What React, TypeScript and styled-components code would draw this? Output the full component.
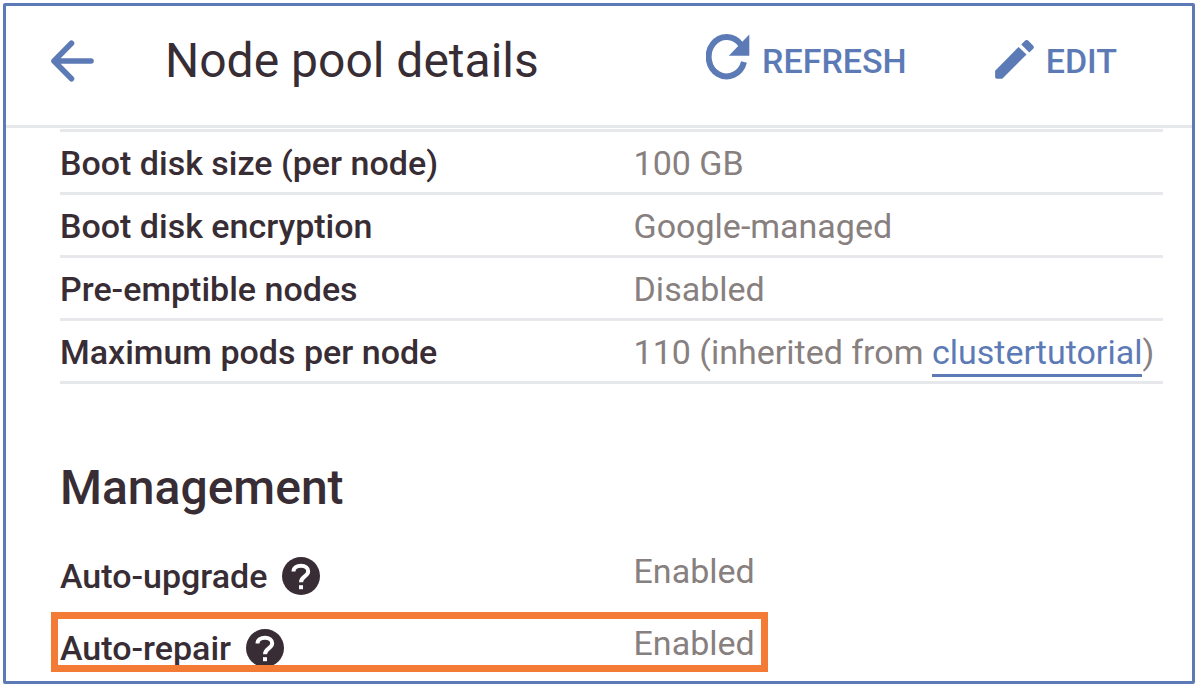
import React from "react";
import styled, { createGlobalStyle } from "styled-components";

const blue = "#5c7bb6";
const ink = "#382d34";
const muted = "#87807f";
const line = "#e6e8eb";
const orange = "#f47b36";

const GlobalStyle = createGlobalStyle`
  *, *::before, *::after { box-sizing: border-box; }
  body {
    margin: 0;
    background: #fff;
    color: ${ink};
    font-family: Roboto, "Liberation Sans", sans-serif;
    font-size: 34px;
    line-height: 40px;
  }
`;

const Page = styled.div`
  display: flex;
  min-height: 100vh;
  padding: 3px 4px 5px 3px;
`;

const Panel = styled.main`
  flex: 1;
  border: 3px solid ${blue};
  border-radius: 2px;
`;

const Header = styled.header`
  display: flex;
  align-items: center;
  padding: 27px 75px 36px 44px;
  border-bottom: 3px solid ${line};
`;

const Title = styled.h1`
  margin: 0 0 0 71px;
  font-size: 48px;
  line-height: 56px;
  font-weight: 400;
`;

const Toolbar = styled.div`
  display: flex;
  gap: 88px;
  margin-left: auto;
`;

const ToolButton = styled.button`
  display: flex;
  align-items: center;
  gap: 12px;
  padding: 0;
  border: 0;
  background: none;
  color: ${blue};
  font: inherit;
  font-weight: 500;
  cursor: pointer;

  svg { display: block; }
`;

const Content = styled.div`
  padding: 0 29px 8px 54px;
`;

const Details = styled.table`
  width: 100%;
  margin-top: 1px;
  border-collapse: collapse;
  table-layout: fixed;
  border-top: 3px solid ${line};

  tr { border-bottom: 3px solid ${line}; }
  th, td {
    height: 63px;
    padding: 2px 0 0;
    text-align: left;
    white-space: nowrap;
  }
  th { width: 52%; font-weight: 500; }
  td { color: ${muted}; }
`;

const ClusterLink = styled.a`
  padding-bottom: 2px;
  border-bottom: 3px solid ${blue};
  color: ${blue};
  text-decoration: none;
`;

const SectionTitle = styled.h2`
  margin: 76px 0 37px;
  font-size: 48px;
  line-height: 56px;
  font-weight: 500;
`;

const Settings = styled.dl`
  display: flex;
  flex-direction: column;
  gap: 26px;
  margin: 0;
`;

const Setting = styled.div<{ $highlighted?: boolean }>`
  position: relative;
  display: grid;
  grid-template-columns: 52% 1fr;
  align-items: start;

  &::after {
    content: ${(p) => (p.$highlighted ? '""' : "none")};
    position: absolute;
    top: -13px;
    left: -9px;
    width: 65%;
    height: 60px;
    border: 7px solid ${orange};
    pointer-events: none;
  }
`;

const SettingName = styled.dt`
  display: flex;
  align-items: center;
  gap: 15px;
  height: 46px;
  font-weight: 500;
`;

const SettingValue = styled.dd`
  margin: 0;
  line-height: 36px;
  color: ${muted};
`;

const BackIcon = () => (
  <svg width="44" height="42" viewBox="0 0 44 42" fill="none" stroke="currentColor" strokeWidth="5.6" strokeLinecap="round" strokeLinejoin="round" aria-hidden="true">
    <path d="M41 21H4M21.5 3.2 4 21l17.500 17.800" />
  </svg>
);

const RefreshIcon = () => (
  <svg width="44" height="54" viewBox="0 0 44 54" aria-hidden="true">
    <path d="M35 10.800A18 19.700 0 1 0 38 28" fill="none" stroke="currentColor" strokeWidth="6" />
    <path d="M43.300 0.500v21.300H22.800z" fill="currentColor" />
  </svg>
);

const EditIcon = () => (
  <svg width="39" height="43" viewBox="3 3 18 20" fill="currentColor" aria-hidden="true">
    <path d="M3 17.250V20.200Q3 21 3.800 21H6.300L17.600 9.800l-3.700-3.600z" />
    <path d="M20.710 7.040c.39-.39.39-1.020 0-1.410l-2.340-2.340c-.39-.39-1.020-.39-1.410 0l-1.830 1.830 3.750 3.750z" />
  </svg>
);

const HelpIcon = () => (
  <svg width="38" height="38" viewBox="0 0 38 38" fill="none" aria-hidden="true">
    <circle cx="19" cy="19" r="19" fill={ink} />
    <path d="M11.500 14.500C11.500 10.500 15 8.800 19 8.800c4.300 0 7.200 2 7.200 5.500 0 5.200-7.200 5.200-7.200 11" stroke="#fff" strokeWidth="4" />
    <path d="M17 28.200h4v4h-4z" fill="#fff" />
  </svg>
);

const rows: { name: string; value: React.ReactNode }[] = [
  { name: "Boot disk size (per node)", value: "100 GB" },
  { name: "Boot disk encryption", value: "Google-managed" },
  { name: "Pre-emptible nodes", value: "Disabled" },
  {
    name: "Maximum pods per node",
    value: <>110 (inherited from <ClusterLink href="#clustertutorial">clustertutorial</ClusterLink>)</>,
  },
];

const settings = [
  { name: "Auto-upgrade", value: "Enabled", highlighted: false },
  { name: "Auto-repair", value: "Enabled", highlighted: true },
];

export default function App() {
  return (
    <>
      <GlobalStyle />
      <Page>
        <Panel>
          <Header>
            <ToolButton type="button" aria-label="Back"><BackIcon /></ToolButton>
            <Title>Node pool details</Title>
            <Toolbar>
              <ToolButton type="button"><RefreshIcon />REFRESH</ToolButton>
              <ToolButton type="button"><EditIcon />EDIT</ToolButton>
            </Toolbar>
          </Header>
          <Content>
            <Details>
              <tbody>
                {rows.map((row) => (
                  <tr key={row.name}>
                    <th scope="row">{row.name}</th>
                    <td>{row.value}</td>
                  </tr>
                ))}
              </tbody>
            </Details>
            <SectionTitle>Management</SectionTitle>
            <Settings>
              {settings.map((s) => (
                <Setting key={s.name} $highlighted={s.highlighted}>
                  <SettingName>
                    {s.name}
                    <ToolButton type="button" aria-label={`About ${s.name}`}><HelpIcon /></ToolButton>
                  </SettingName>
                  <SettingValue>{s.value}</SettingValue>
                </Setting>
              ))}
            </Settings>
          </Content>
        </Panel>
      </Page>
    </>
  );
}
